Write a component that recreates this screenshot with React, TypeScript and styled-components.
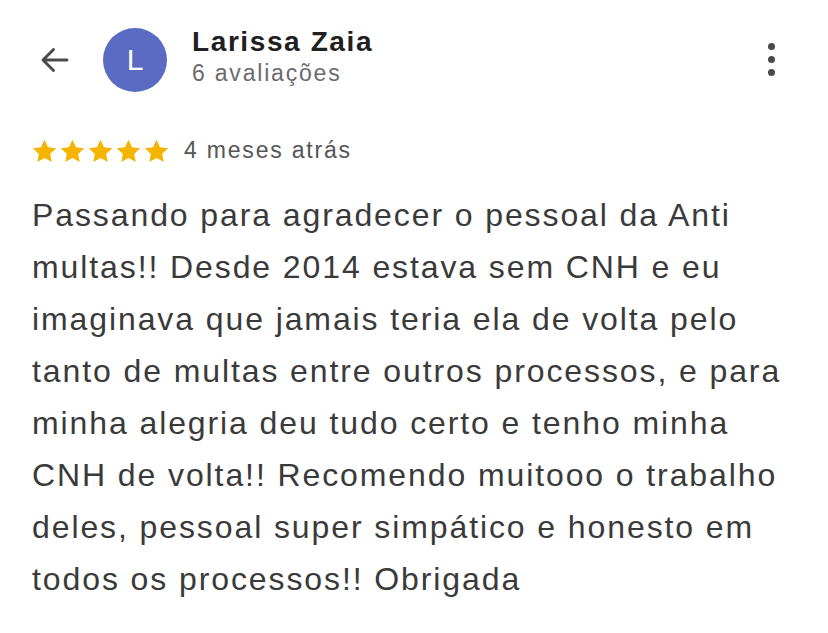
import styled, { createGlobalStyle } from "styled-components";

const GlobalStyle = createGlobalStyle`
  body {
    margin: 0;
    background: #ffffff;
    font-family: "Liberation Sans", Arial, sans-serif;
  }
`;

const Page = styled.div`
  width: 828px;
  height: 633px;
  background: #fff;
  box-sizing: border-box;
  padding: 28px 32px 0 32px;
`;

const Header = styled.div`
  display: flex;
  align-items: center;
`;

const IconButton = styled.div`
  width: 48px;
  display: flex;
  align-items: center;
  justify-content: flex-start;
  padding-left: 5px;
`;

const Avatar = styled.div`
  width: 64px;
  height: 64px;
  border-radius: 50%;
  background: #5b6bc4;
  color: #fff;
  display: flex;
  align-items: center;
  justify-content: center;
  font-size: 30px;
  margin-left: 18px;
`;

const Info = styled.div`
  margin-left: 25px;
  flex: 1;
  display: flex;
  flex-direction: column;
  margin-top: -7px;
`;

const Name = styled.div`
  font-size: 28px;
  font-weight: bold;
  color: #202020;
  line-height: 32px;
  letter-spacing: 1.6px;
`;

const Count = styled.div`
  font-size: 23px;
  color: #6b6b6b;
  line-height: 30px;
  letter-spacing: 1.8px;
`;

const MoreButton = styled.div`
  display: flex;
  flex-direction: column;
  gap: 6px;
  margin-right: 21px;
  margin-top: -2px;
`;

const Dot = styled.span`
  width: 7px;
  height: 7px;
  border-radius: 50%;
  background: #4a4a4a;
`;

const RatingRow = styled.div`
  display: flex;
  align-items: center;
  margin-top: 45px;
`;

const Stars = styled.div`
  display: flex;
  gap: 3px;
`;

const When = styled.span`
  font-size: 23px;
  color: #555;
  margin-left: 15px;
  letter-spacing: 1.8px;
`;

const Body = styled.p`
  margin: 25px 0 0 0;
  font-size: 32px;
  line-height: 52px;
  letter-spacing: 1.9px;
  color: #3a3a3a;
  white-space: nowrap;
`;

const Star = () => (
  <svg width="25" height="24" viewBox="0 0 24 23">
    <path
      d="M12 0.8l3.4 7.2 7.8 0.9-5.8 5.4 1.6 7.8L12 18.2l-7 3.9 1.6-7.8L0.8 8.9l7.8-0.9z"
      fill="#f5b400"
    />
  </svg>
);

const lines = [
  "Passando para agradecer o pessoal da Anti",
  "multas!! Desde 2014 estava sem CNH e eu",
  "imaginava que jamais teria ela de volta pelo",
  "tanto de multas entre outros processos, e para",
  "minha alegria deu tudo certo e tenho minha",
  "CNH de volta!! Recomendo muitooo o trabalho",
  "deles, pessoal super simpático e honesto em",
  "todos os processos!! Obrigada",
];

const App = () => {
  return (
    <Page>
      <GlobalStyle />
      <Header>
        <IconButton>
          <svg width="36" height="36" viewBox="0 0 24 24" fill="none">
            <path
              d="M20 12H5M11 5l-7 7 7 7"
              stroke="#4a4a4a"
              strokeWidth="1.9"
              strokeLinecap="round"
              strokeLinejoin="round"
            />
          </svg>
        </IconButton>
        <Avatar>L</Avatar>
        <Info>
          <Name>Larissa Zaia</Name>
          <Count>6 avaliações</Count>
        </Info>
        <MoreButton>
          <Dot />
          <Dot />
          <Dot />
        </MoreButton>
      </Header>
      <RatingRow>
        <Stars>
          {[0, 1, 2, 3, 4].map((i) => (
            <Star key={i} />
          ))}
        </Stars>
        <When>4 meses atrás</When>
      </RatingRow>
      <Body>
        {lines.map((l, i) => (
          <span key={i}>
            {l}
            {i < lines.length - 1 && <br />}
          </span>
        ))}
      </Body>
    </Page>
  );
};

export default App;
